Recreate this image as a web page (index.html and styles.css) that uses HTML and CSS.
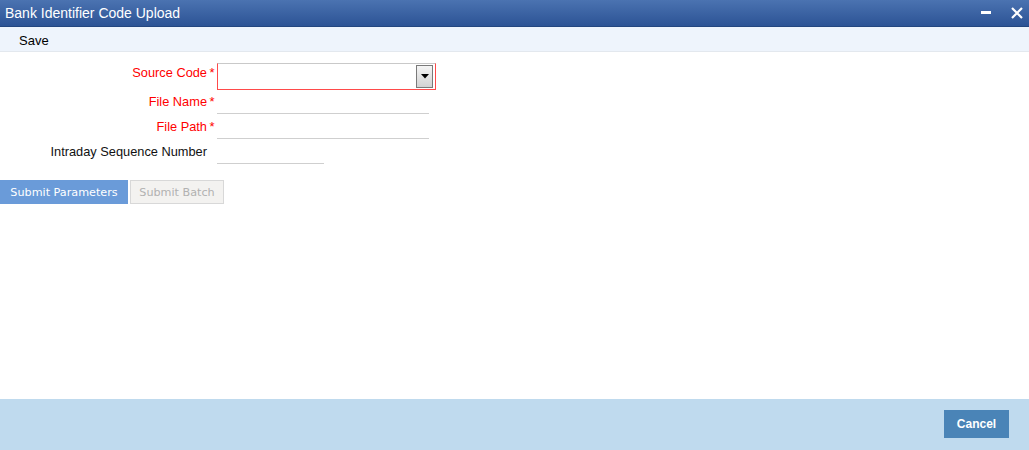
FILE: index.html
```html
<!DOCTYPE html>
<html>
<head>
<meta charset="utf-8">
<title>Bank Identifier Code Upload</title>
<link rel="stylesheet" href="styles.css">
</head>
<body>
<div class="window">
  <header class="titlebar">
    <span class="title">Bank Identifier Code Upload</span>
    <div class="win-controls">
      <span class="ctl-min"></span>
      <svg class="ctl-close" width="12" height="12" viewBox="0 0 12 12"><path d="M1 1 L11 11 M11 1 L1 11" stroke="#fff" stroke-width="2.2" fill="none"/></svg>
    </div>
  </header>
  <nav class="toolbar"><span class="tool">Save</span></nav>
  <main class="content">
    <div class="form">
      <div class="row row-select">
        <label class="lbl req">Source Code</label><span class="star">*</span>
        <div class="select"><span class="drop-btn"><svg width="8" height="5" viewBox="0 0 8 5"><path d="M0 0 H8 L4 4.5 Z" fill="#000"/></svg></span></div>
      </div>
      <div class="row">
        <label class="lbl req">File Name</label><span class="star">*</span>
        <div class="field wide"></div>
      </div>
      <div class="row">
        <label class="lbl req">File Path</label><span class="star">*</span>
        <div class="field wide"></div>
      </div>
      <div class="row">
        <label class="lbl">Intraday Sequence Number</label><span class="star"></span>
        <div class="field narrow"></div>
      </div>
    </div>
    <div class="actions">
      <button class="btn-primary">Submit Parameters</button>
      <button class="btn-disabled">Submit Batch</button>
    </div>
  </main>
  <footer class="footer">
    <button class="btn-cancel">Cancel</button>
  </footer>
</div>
</body>
</html>
```
FILE: styles.css
```css
html, body {
  margin: 0;
  padding: 0;
  background: #fff;
}
body {
  font-family: "Liberation Sans", Arial, sans-serif;
  width: 1029px;
  height: 450px;
  overflow: hidden;
}
.window {
  display: flex;
  flex-direction: column;
  height: 450px;
}
.titlebar {
  height: 26px;
  border-bottom: 1px solid #23467f;
  background: linear-gradient(#4b73b1, #2c5395);
  display: flex;
  align-items: center;
  justify-content: space-between;
  color: #fff;
}
.title {
  font-size: 14px;
  padding-left: 5px;
  line-height: 26px;
}
.win-controls {
  display: flex;
  align-items: center;
  gap: 20px;
  padding-right: 6px;
  height: 26px;
}
.ctl-min {
  width: 10px;
  height: 3px;
  background: #fff;
  margin-top: -1px;
}
.ctl-close {
  display: block;
  margin-top: -1px;
}
.toolbar {
  height: 24px;
  background: #eef4fc;
  border-bottom: 1px solid #e3e8ee;
  display: flex;
  align-items: center;
}
.tool {
  font-size: 13px;
  color: #000;
  padding-left: 19px;
  padding-top: 3px;
}
.content {
  flex: 1;
  padding-top: 11px;
}
.form {
  display: flex;
  flex-direction: column;
}
.row {
  display: flex;
  align-items: center;
  height: 25px;
}
.row-select {
  align-items: flex-start;
  height: 26px;
}
.lbl {
  width: 207px;
  text-align: right;
  font-size: 12.8px;
  line-height: 16px;
  color: #111;
}
.row-select .lbl,
.row-select .star {
  padding-top: 2px;
}
.lbl.req {
  color: #f00;
}
.star {
  width: 10px;
  text-align: center;
  font-size: 13px;
  line-height: 16px;
  color: #f00;
}
.select {
  box-sizing: border-box;
  width: 219px;
  height: 27px;
  border: 1px solid #ff4a4a;
  border-top-color: #c9c9c9;
  display: flex;
  justify-content: flex-end;
  align-items: center;
  padding-right: 2px;
}
.drop-btn {
  box-sizing: border-box;
  width: 17px;
  height: 23px;
  border: 1px solid #7a7a7a;
  background: linear-gradient(#f5f5f5, #d2d2d2);
  display: flex;
  align-items: center;
  justify-content: center;
}
.drop-btn svg {
  display: block;
}
.field {
  box-sizing: border-box;
  height: 25px;
  border-bottom: 1px solid #cfcfcf;
}
.field.wide {
  width: 212px;
}
.field.narrow {
  width: 107px;
}
.actions {
  display: flex;
  gap: 2px;
  margin-top: 16px;
  align-items: center;
}
.actions button {
  font-family: "DejaVu Sans", Verdana, sans-serif;
  font-size: 11.2px;
  height: 24px;
  padding: 0;
  margin: 0;
  box-sizing: border-box;
  white-space: nowrap;
  text-align: center;
}
.btn-primary {
  background: #6a9bd9;
  color: #fff;
  border: 1px solid #6a9bd9;
  width: 128px;
}
.btn-disabled {
  background: #f3f2f0;
  color: #b1b1b1;
  border: 1px solid #d8d8d8;
  width: 94px;
}
.footer {
  height: 51px;
  background: #bfdaee;
  display: flex;
  justify-content: flex-end;
  align-items: flex-start;
  padding-right: 20px;
  box-sizing: border-box;
  padding-top: 11px;
}
.btn-cancel {
  width: 65px;
  height: 28px;
  background: #4a84b7;
  color: #fff;
  border: none;
  font-family: "Liberation Sans", Arial, sans-serif;
  font-weight: bold;
  font-size: 12px;
  margin: 0;
  padding: 0;
}
```
